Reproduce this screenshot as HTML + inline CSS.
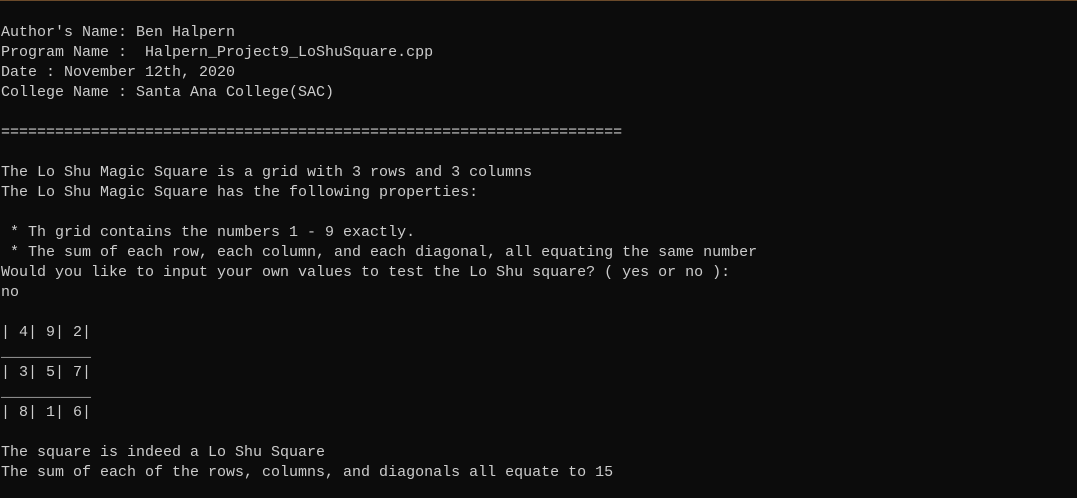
<!DOCTYPE html>
<html><head><meta charset="utf-8"><style>
html,body{margin:0;padding:0;}
body{width:1077px;height:498px;background:#0c0c0c;overflow:hidden;border-top:1px solid #6b4a2a;box-sizing:border-box;}
pre{margin:0;padding:22px 0 0 1px;font-family:"Liberation Mono",monospace;font-size:15px;line-height:20px;color:#cccccc;}
</style></head><body><pre>Author's Name: Ben Halpern
Program Name :  Halpern_Project9_LoShuSquare.cpp
Date : November 12th, 2020
College Name : Santa Ana College(SAC)

=====================================================================

The Lo Shu Magic Square is a grid with 3 rows and 3 columns
The Lo Shu Magic Square has the following properties:

 * Th grid contains the numbers 1 - 9 exactly.
 * The sum of each row, each column, and each diagonal, all equating the same number
Would you like to input your own values to test the Lo Shu square? ( yes or no ):
no

| 4| 9| 2|
__________
| 3| 5| 7|
__________
| 8| 1| 6|

The square is indeed a Lo Shu Square
The sum of each of the rows, columns, and diagonals all equate to 15
</pre></body></html>
